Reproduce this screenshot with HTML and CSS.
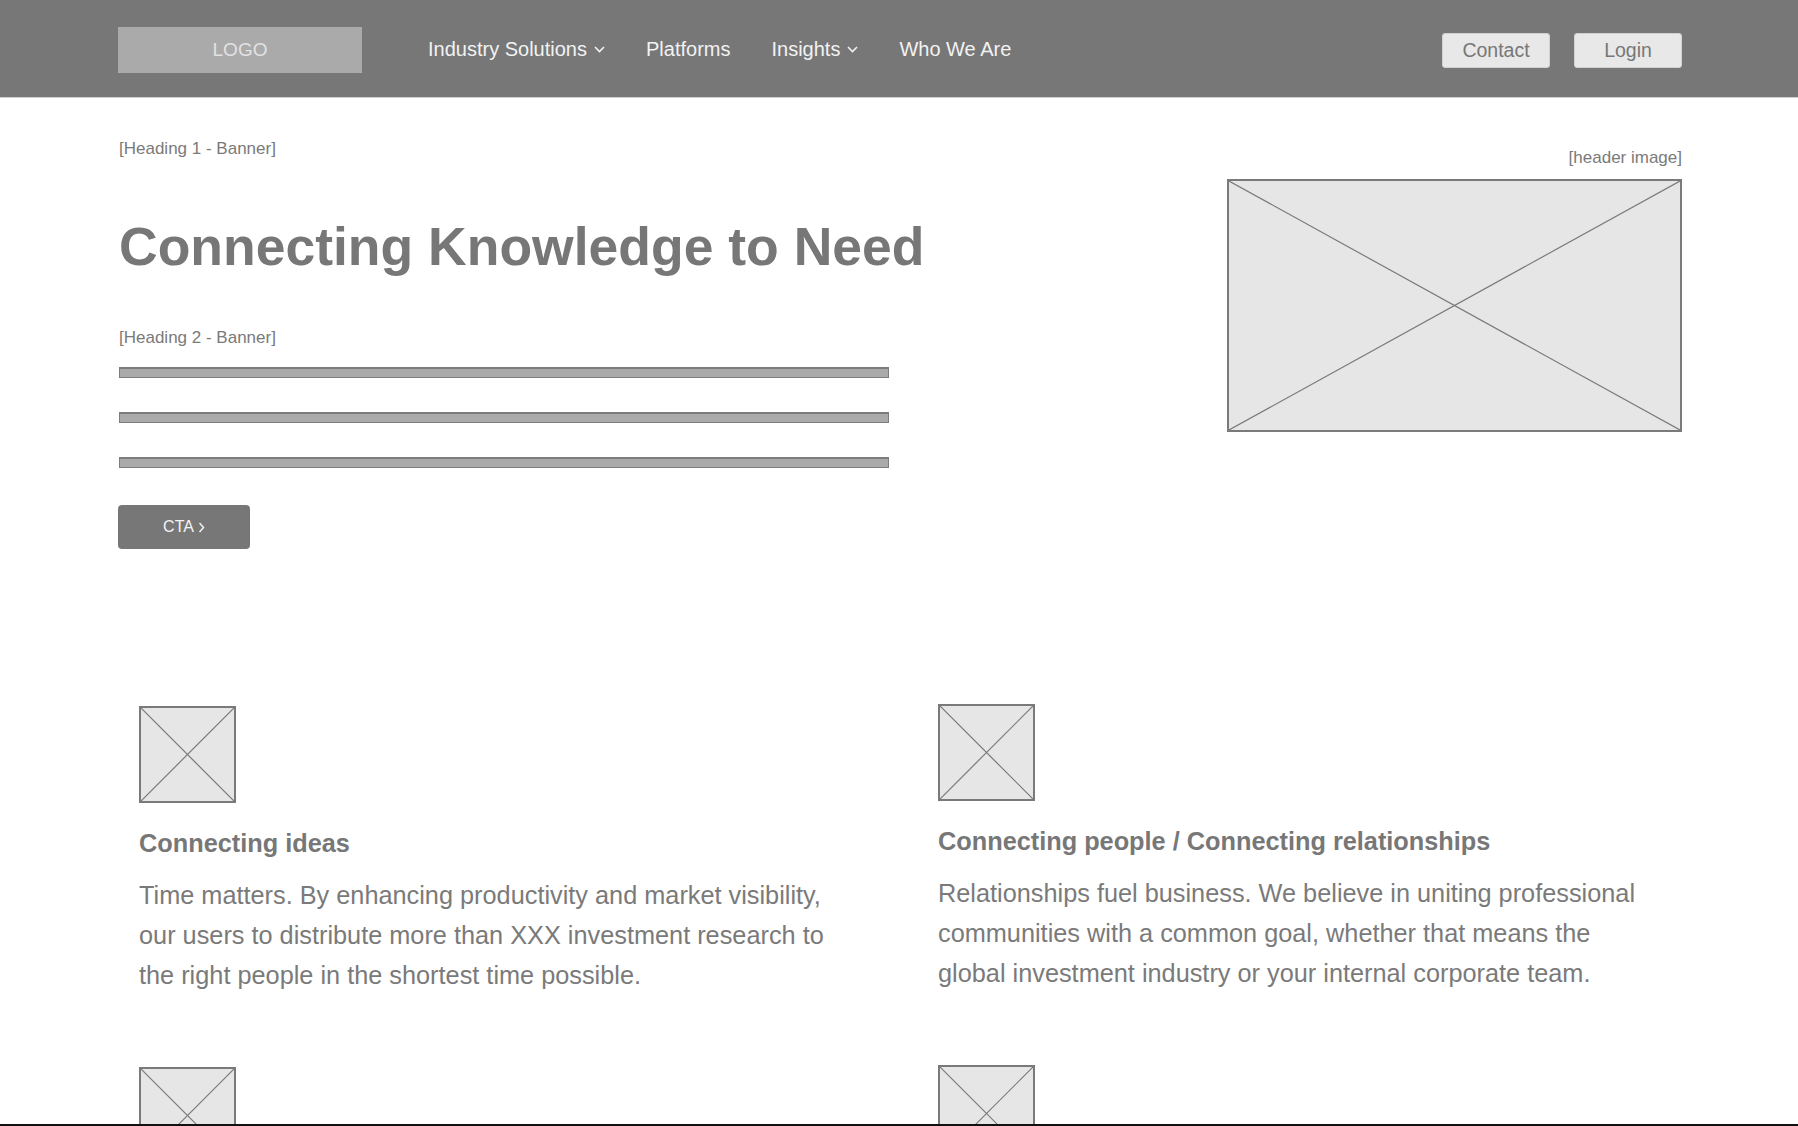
FILE: index.html
```html
<!DOCTYPE html>
<html lang="en">
<head>
<meta charset="utf-8">
<title>Connecting Knowledge to Need</title>
<link rel="stylesheet" href="styles.css">
</head>
<body>
<header class="nav">
  <div class="container nav-inner">
    <div class="logo">LOGO</div>
    <nav class="menu">
      <a class="menu-item" href="#">Industry Solutions
        <svg class="chev" width="11" height="7" viewBox="0 0 11 7"><polyline points="1,1 5.5,5.5 10,1" fill="none" stroke="#f2f2f2" stroke-width="1.6"/></svg>
      </a>
      <a class="menu-item" href="#">Platforms</a>
      <a class="menu-item" href="#">Insights
        <svg class="chev" width="11" height="7" viewBox="0 0 11 7"><polyline points="1,1 5.5,5.5 10,1" fill="none" stroke="#f2f2f2" stroke-width="1.6"/></svg>
      </a>
      <a class="menu-item" href="#">Who We Are</a>
    </nav>
    <div class="actions">
      <a class="btn-light" href="#">Contact</a>
      <a class="btn-light" href="#">Login</a>
    </div>
  </div>
</header>

<main class="container">
  <section class="hero">
    <div class="hero-text">
      <div class="label">[Heading 1 - Banner]</div>
      <h1 class="title">Connecting Knowledge to Need</h1>
      <div class="label label-h2">[Heading 2 - Banner]</div>
      <div class="bars">
        <div class="bar"></div>
        <div class="bar"></div>
        <div class="bar"></div>
      </div>
      <a class="cta" href="#">CTA
        <svg class="cta-chev" width="7" height="11" viewBox="0 0 7 11"><polyline points="1.5,1 5.5,5.5 1.5,10" fill="none" stroke="#f2f2f2" stroke-width="1.5"/></svg>
      </a>
    </div>
    <div class="hero-media">
      <div class="label label-right">[header image]</div>
      <div class="placeholder hero-img">
        <svg viewBox="0 0 100 100" preserveAspectRatio="none"><line x1="0" y1="0" x2="100" y2="100" vector-effect="non-scaling-stroke"/><line x1="100" y1="0" x2="0" y2="100" vector-effect="non-scaling-stroke"/></svg>
      </div>
    </div>
  </section>

  <section class="features">
    <article class="feature">
      <div class="placeholder icon">
        <svg viewBox="0 0 100 100" preserveAspectRatio="none"><line x1="0" y1="0" x2="100" y2="100" vector-effect="non-scaling-stroke"/><line x1="100" y1="0" x2="0" y2="100" vector-effect="non-scaling-stroke"/></svg>
      </div>
      <h3 class="feature-title">Connecting ideas</h3>
      <p class="feature-text">Time matters. By enhancing productivity and market visibility, our users to distribute more than XXX investment research to the right people in the shortest time possible.</p>
    </article>
    <article class="feature feature-right">
      <div class="placeholder icon">
        <svg viewBox="0 0 100 100" preserveAspectRatio="none"><line x1="0" y1="0" x2="100" y2="100" vector-effect="non-scaling-stroke"/><line x1="100" y1="0" x2="0" y2="100" vector-effect="non-scaling-stroke"/></svg>
      </div>
      <h3 class="feature-title">Connecting people / Connecting relationships</h3>
      <p class="feature-text">Relationships fuel business. We believe in uniting professional communities with a common goal, whether that means the global investment industry or your internal corporate team.</p>
    </article>
    <article class="feature">
      <div class="placeholder icon">
        <svg viewBox="0 0 100 100" preserveAspectRatio="none"><line x1="0" y1="0" x2="100" y2="100" vector-effect="non-scaling-stroke"/><line x1="100" y1="0" x2="0" y2="100" vector-effect="non-scaling-stroke"/></svg>
      </div>
    </article>
    <article class="feature feature-right">
      <div class="placeholder icon">
        <svg viewBox="0 0 100 100" preserveAspectRatio="none"><line x1="0" y1="0" x2="100" y2="100" vector-effect="non-scaling-stroke"/><line x1="100" y1="0" x2="0" y2="100" vector-effect="non-scaling-stroke"/></svg>
      </div>
    </article>
  </section>
</main>
<div class="frame-edge"></div>
</body>
</html>
```

FILE: styles.css
```css
* { box-sizing: border-box; }

html, body {
  margin: 0;
  padding: 0;
  background: #ffffff;
  font-family: "Liberation Sans", Arial, Helvetica, sans-serif;
  color: #777777;
}

a { text-decoration: none; color: inherit; }

.container {
  margin: 0 116px 0 118px;
}

/* ---------- Navigation ---------- */
.nav {
  background: #777777;
  height: 98px;
  border-bottom: 1px solid #cfcfcf;
}

.nav-inner {
  height: 97px;
  display: flex;
  align-items: center;
}

.logo {
  width: 244px;
  height: 46px;
  margin-top: 2px;
  background: #aaaaaa;
  color: #e2e2e2;
  font-size: 19px;
  display: flex;
  align-items: center;
  justify-content: center;
}

.menu {
  display: flex;
  align-items: center;
  gap: 41px;
  margin-left: 66px;
}

.menu-item {
  display: flex;
  align-items: center;
  color: #f2f2f2;
  font-size: 20px;
  line-height: 24px;
}

.chev {
  margin-left: 7px;
  margin-top: 1px;
}

.actions {
  margin-left: auto;
  margin-top: 3px;
  display: flex;
  gap: 24px;
}

.btn-light {
  width: 108px;
  height: 35px;
  background: #e8e8e8;
  border: 1px solid #d2d2d2;
  border-radius: 3px;
  color: #777777;
  font-size: 19.5px;
  display: flex;
  align-items: center;
  justify-content: center;
}

/* ---------- Hero ---------- */
.hero {
  display: flex;
  justify-content: space-between;
  align-items: flex-start;
  padding-top: 41px;
}

.hero-text {
  width: 830px;
  padding-left: 1px;
}

.label {
  font-size: 17px;
  line-height: 19px;
  color: #7a7a7a;
}

.title {
  margin: 58px 0 0 0;
  font-size: 53.5px;
  line-height: 61px;
  font-weight: 700;
  color: #777777;
  white-space: nowrap;
}

.label-h2 {
  margin-top: 51px;
}

.bars {
  margin-top: 20px;
  display: flex;
  flex-direction: column;
  gap: 34px;
}

.bar {
  width: 770px;
  height: 11px;
  background: #aaaaaa;
  border: 1px solid #7c7c7c;
  border-top-width: 2px;
}

.cta {
  margin-top: 37px;
  margin-left: -1px;
  width: 132px;
  height: 44px;
  background: #777777;
  border-radius: 4px;
  color: #f4f4f4;
  font-size: 16px;
  display: flex;
  align-items: center;
  justify-content: center;
}

.cta-chev {
  margin-left: 4px;
}

.hero-media {
  width: 455px;
  padding-top: 9px;
  display: flex;
  flex-direction: column;
}

.label-right {
  text-align: right;
}

.placeholder {
  background: #e6e6e6;
  border: 2px solid #7a7a7a;
}

.placeholder svg {
  display: block;
  width: 100%;
  height: 100%;
}

.placeholder line {
  stroke: #7a7a7a;
  stroke-width: 1.2;
}

.hero-img {
  margin-top: 12px;
  height: 253px;
}

/* ---------- Features ---------- */
.features {
  margin-top: 157px;
  padding-left: 21px;
  padding-right: 21px;
  display: grid;
  grid-template-columns: 1fr 1fr;
  column-gap: 76px;
  row-gap: 72px;
}

.feature-right {
  margin-top: -2px;
}

.icon {
  width: 97px;
  height: 97px;
}

.feature-title {
  margin: 25px 0 0 0;
  font-size: 25.3px;
  line-height: 30px;
  font-weight: 700;
  color: #777777;
}

.feature-text {
  margin: 17px 0 0 0;
  max-width: 718px;
  font-size: 25.3px;
  line-height: 40px;
  color: #7a7a7a;
}

.frame-edge {
  position: fixed;
  left: 0;
  right: 0;
  bottom: 0;
  height: 2px;
  background: #111111;
}
```
